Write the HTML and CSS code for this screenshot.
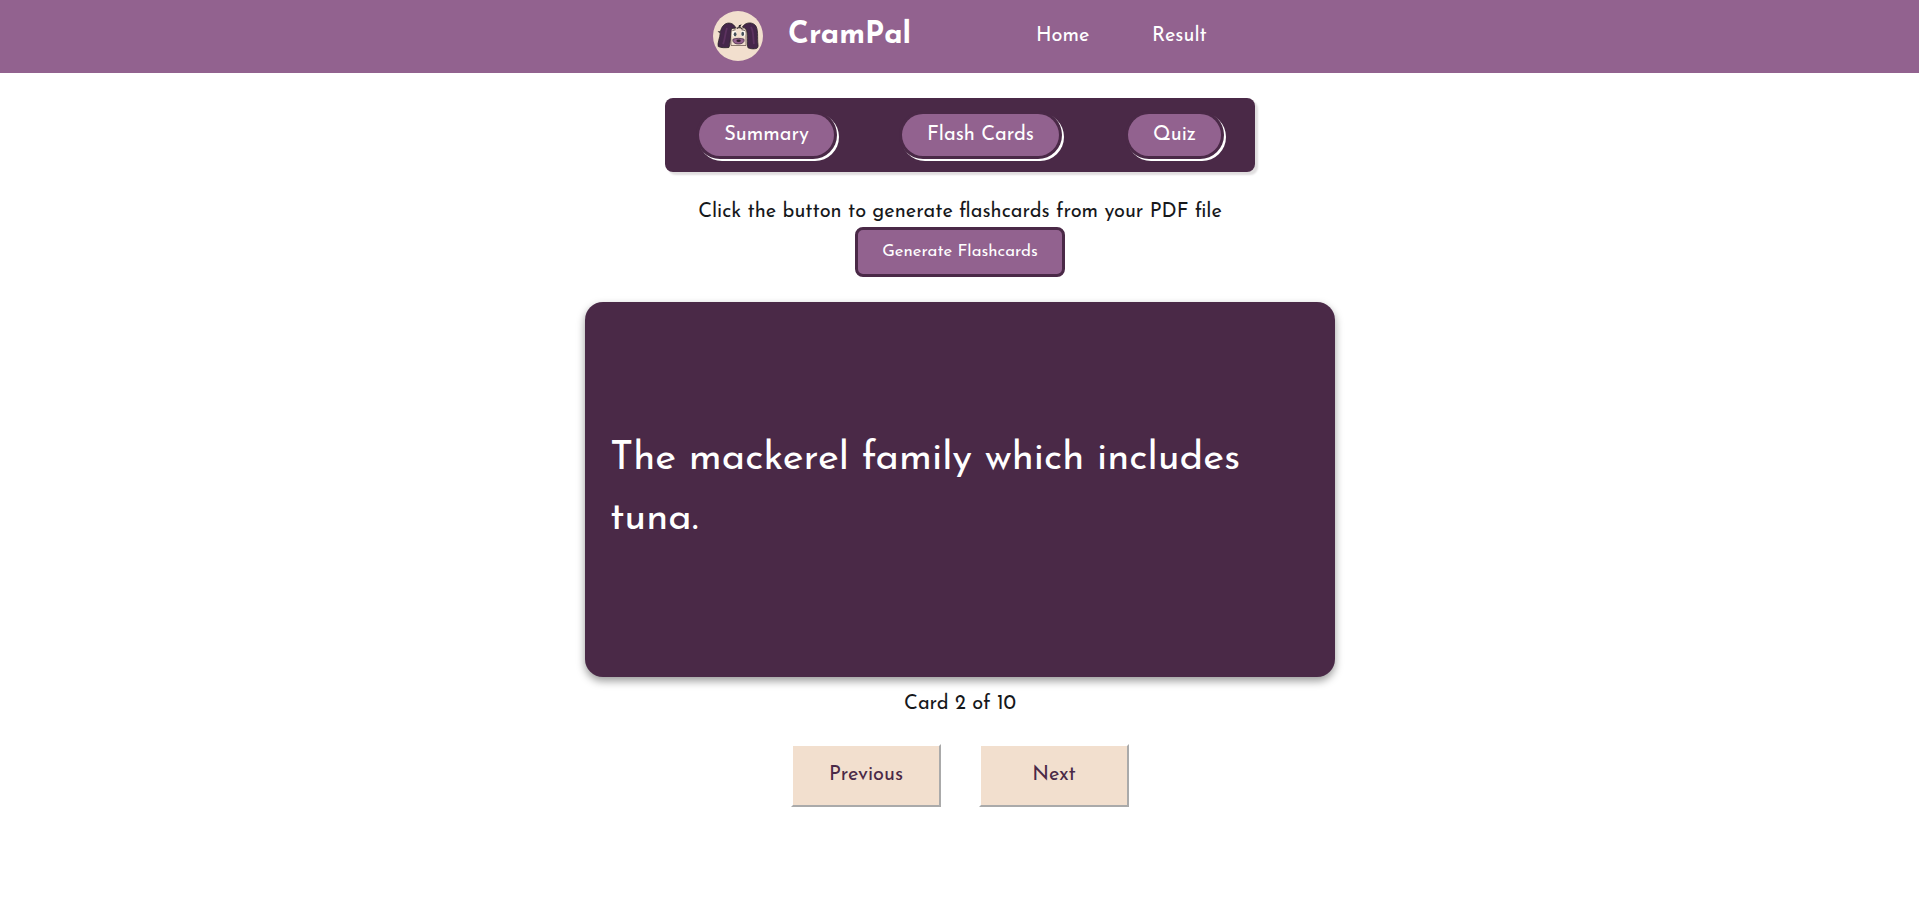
FILE: index.html
```html
<!DOCTYPE html>
<html lang="en">
<head>
<meta charset="utf-8">
<title>CramPal</title>
<link rel="stylesheet" href="styles.css">
</head>
<body>
<header class="header">
  <svg class="logo" viewBox="0 0 50 50" aria-hidden="true">
    <circle cx="25" cy="25" r="25" fill="#f2dfce"/>
    <path d="M17.500 17h15.500v17.500H18z" fill="#f2dfce" stroke="#5b4a43" stroke-width=".7"/>
    <path d="M22 15.500c-3-4.500-9-4.500-12-.5-1.500 1.800-2 3.500-2.300 5-.8.700-1.600.7-2.400.6.600.9 1.300 1.100 2 1C7 27 4.200 32 5.200 35.500c3 1.500 7.200 1.300 10.700 1 1.500-3 1.500-14 2.600-19 1.700-.3 2.500-.2 4-.5z" fill="#45264a" stroke="#2b2529" stroke-width=".8"/>
    <path d="M29.500 16c2-4 8-5.500 12-2.500 4.500 3.500 2.500 14 3.500 20 .3 2-.2 3.500-1.500 4-3 .7-6 .4-8.500-.7-1.500-3 .5-15-2-18.800-.8-1-2-1.500-3.500-2z" fill="#45264a" stroke="#2b2529" stroke-width=".8"/>
    <path d="M14 17c-2 5-2 12-4 16M38 16c3 5 2 12 3 17" fill="none" stroke="#5c325f" stroke-width="1.800"/>
    <path d="M24 17.500c1.500-.7 2.300-1.900 2.500-3.500 0 2 1 3.300 3 4M26 17l2-3.500" fill="none" stroke="#2b2529" stroke-width="1"/>
    <ellipse cx="21.300" cy="22.800" rx="2.300" ry="3" fill="#fffaf2"/><ellipse cx="30.100" cy="22.600" rx="2.300" ry="3" fill="#fffaf2"/>
    <ellipse cx="22.100" cy="23.300" rx="1.400" ry="2.100" fill="#46505a"/><ellipse cx="29.700" cy="22.900" rx="1.400" ry="2.100" fill="#46505a"/>
    <path d="M19.500 19.500l3-.8M28.500 18.700l3.500.8" stroke="#3a3030" stroke-width=".7"/>
    <path d="M20 28.200c3-1.200 8-1.200 11 0 .8 3-1.800 4.800-5.500 4.800s-6.300-1.800-5.500-4.800z" fill="#94618e" stroke="#3b263d" stroke-width=".7"/>
    <ellipse cx="25.600" cy="29.800" rx="2.200" ry="1.200" fill="#35202f"/>
  </svg>
  <span class="brand">CramPal</span>
  <nav class="nav"><a class="home">Home</a><a class="result">Result</a></nav>
</header>
<main class="main">
  <nav class="tabs">
    <button class="pill summary">Summary</button>
    <button class="pill cards">Flash Cards</button>
    <button class="pill quiz">Quiz</button>
  </nav>
  <p class="hint">Click the button to generate flashcards from your PDF file</p>
  <button class="generate">Generate Flashcards</button>
  <section class="flashcard"><p class="question">The mackerel family which includes<br><span class="last">tuna.</span></p></section>
  <p class="counter">Card 2 of 10</p>
  <div class="pager">
    <button class="step previous">Previous</button>
    <button class="step next">Next</button>
  </div>
</main>
</body>
</html>
```

FILE: styles.css
```css
* { box-sizing: border-box; }
body { margin: 0; background: #fff; color: #16181b; font-family: "Josefin Sans", Lato, sans-serif; font-size: 20px; }
p { margin: 0; white-space: nowrap; }
button { font-family: inherit; font-size: inherit; padding: 0; border: 0; white-space: nowrap; }
.header { height: 73px; background: #92628f; color: #fff; display: flex; padding: 11px 0 0 713px; }
.logo { width: 50px; height: 50px; flex: none; }
.brand { width: 120px; margin-left: 25px; font-size: 30px; line-height: 49px; font-weight: 700; }
.nav { display: flex; margin-left: 128px; line-height: 50px; }
.home { width: 116px; }
.main { display: flex; flex-direction: column; align-items: center; padding-top: 25px; }
.tabs { width: 590px; height: 74px; margin-left: 1px; padding: 16px 34px; display: flex; justify-content: space-between; background: #4a2947; border-radius: 8px; box-shadow: 3px 3px 2px #e0dedf; }
.pill { height: 42px; color: #fff; background: #92628f; border-radius: 21px; box-shadow: 0 0 0 3px #4a2947, 2px 2px 0 3px #fff; }
.summary { width: 135px; }
.cards { width: 157px; margin-right: 2px; padding-left: 1px; }
.quiz { width: 93px; }
.hint { margin: 26px 0 0 1px; height: 29px; line-height: 28px; }
.generate { width: 210px; height: 50px; margin-left: 1px; padding-bottom: 1px; color: #fff; background: #92628f; border: 3px solid #4a2947; border-radius: 8px; font-size: 16.8px; }
.flashcard { width: 750px; height: 375px; margin: 25px 0 0 1px; padding: 0 25px 2px; display: flex; align-items: center; color: #fff; background: #4a2947; border-radius: 18px; box-shadow: 0 4px 8px rgba(0, 0, 0, .4); }
.question { font-size: 40px; line-height: 60px; }
.counter { margin: 12px 0 0 1px; height: 55px; line-height: 30px; }
.pager { display: flex; gap: 38px; margin-left: 1px; }
.step { width: 150px; height: 63px; padding-bottom: 2px; color: #4a2947; background: #f2dfce; border: 2px solid; border-color: #fff #aaa #aaa #fff; }
```
